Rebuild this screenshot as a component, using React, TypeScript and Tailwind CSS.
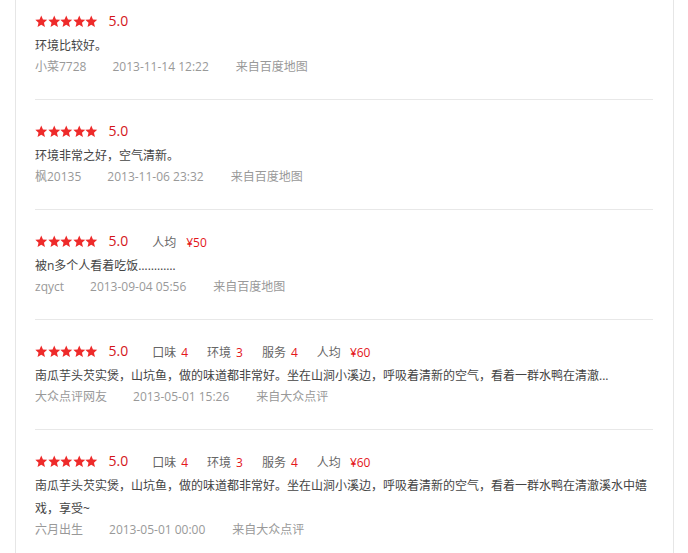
import React from "react";

type Stat = { label: string; value: string };
type Review = {
  stats?: Stat[];
  price?: string;
  text: string[];
  user: string;
  date: string;
  source: string;
};

const reviews: Review[] = [
  { text: ["环境比较好。"], user: "小菜7728", date: "2013-11-14 12:22", source: "来自百度地图" },
  { text: ["环境非常之好，空气清新。"], user: "枫20135", date: "2013-11-06 23:32", source: "来自百度地图" },
  { price: "¥50", text: ["被n多个人看着吃饭…………"], user: "zqyct", date: "2013-09-04 05:56", source: "来自百度地图" },
  {
    stats: [
      { label: "口味", value: "4" },
      { label: "环境", value: "3" },
      { label: "服务", value: "4" },
    ],
    price: "¥60",
    text: ["南瓜芋头芡实煲，山坑鱼，做的味道都非常好。坐在山涧小溪边，呼吸着清新的空气，看着一群水鸭在清澈..."],
    user: "大众点评网友",
    date: "2013-05-01 15:26",
    source: "来自大众点评",
  },
  {
    stats: [
      { label: "口味", value: "4" },
      { label: "环境", value: "3" },
      { label: "服务", value: "4" },
    ],
    price: "¥60",
    text: ["南瓜芋头芡实煲，山坑鱼，做的味道都非常好。坐在山涧小溪边，呼吸着清新的空气，看着一群水鸭在清澈溪水中嬉", "戏，享受~"],
    user: "六月出生",
    date: "2013-05-01 00:00",
    source: "来自大众点评",
  },
];

function Star() {
  return (
    <svg width="12.5" height="13" viewBox="0 0 24 24" className="shrink-0" preserveAspectRatio="none">
      <path
        d="M12 0.8l3.3 7.4 8.1.7-6.2 5.3 1.9 7.9L12 17.9 4.9 22.1l1.9-7.9L.6 8.9l8.1-.7z"
        fill="#ee2a2a"
      />
    </svg>
  );
}

export default function App() {
  return (
    <div
      className="min-h-[553px] bg-white"
      style={{ fontFamily: '"Open Sans", "Noto Sans CJK SC", sans-serif' }}
    >
      <div className="ml-[15px] w-[659px] min-h-[553px] border-l border-r border-[#e6e6e6] pl-[19px] pr-[20px]">
        {reviews.map((r, i) => (
          <div
            key={i}
            className={`${i === 0 ? "pt-[10px]" : "pt-[20px]"} ${
              i < reviews.length - 1 ? "pb-[22px] border-b border-[#e8e8e8]" : "pb-[10px]"
            }`}
          >
            <div className="flex items-center h-[22px]">
              <div className="flex items-center">
                <Star />
                <Star />
                <Star />
                <Star />
                <Star />
              </div>
              <span className="ml-[11px] text-[14px] leading-[22px] text-[#d4161b]">5.0</span>
              {(r.stats || r.price) && (
                <div className="ml-[24px] mt-[3px] flex items-center text-[12px] leading-[22px]">
                  {r.stats?.map((s, j) => (
                    <span key={j} className="mr-[19px] flex items-center">
                      <span className="text-[#666]">{s.label}</span>
                      <span className="ml-[5px] text-[#e4161b]">{s.value}</span>
                    </span>
                  ))}
                  {r.price && (
                    <span className="flex items-center">
                      <span className="text-[#666]">人均</span>
                      <span className={`${r.stats ? "ml-[9px]" : "ml-[10px]"} text-[#e4161b]`}>{r.price}</span>
                    </span>
                  )}
                </div>
              )}
            </div>
            <div className="mt-[2px] text-[12px] leading-[23px] text-[#444]">
              {r.text.map((t, k) => (
                <div key={k} className="whitespace-nowrap">
                  {t}
                </div>
              ))}
            </div>
            <div className="flex text-[12px] leading-[20px] text-[#999]">
              <span className="mr-[26px]">{r.user}</span>
              <span className="mr-[27px]">{r.date}</span>
              <span>{r.source}</span>
            </div>
          </div>
        ))}
      </div>
    </div>
  );
}
